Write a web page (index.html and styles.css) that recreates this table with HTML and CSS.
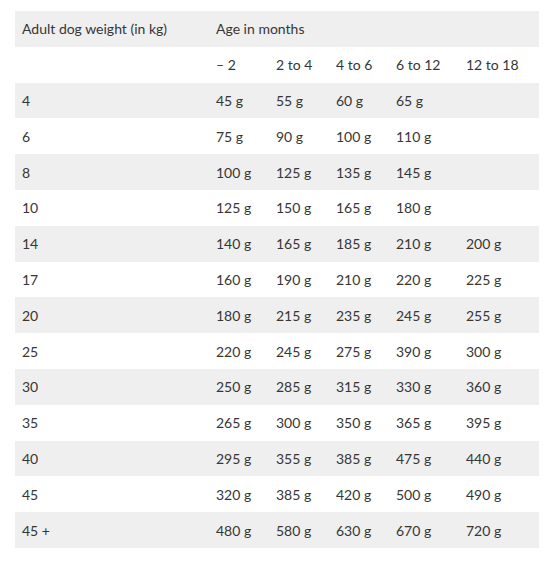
FILE: index.html
```html
<!DOCTYPE html>
<html>
<head>
<meta charset="utf-8">
<link rel="stylesheet" href="styles.css">
</head>
<body>
<table class="feed">
  <colgroup>
    <col class="c1"><col class="c2"><col class="c3"><col class="c4"><col class="c5"><col class="c6">
  </colgroup>
  <thead>
    <tr><th>Adult dog weight (in kg)</th><th colspan="5">Age in months</th></tr>
    <tr><th></th><th>– 2</th><th>2 to 4</th><th>4 to 6</th><th>6 to 12</th><th>12 to 18</th></tr>
  </thead>
  <tbody>
    <tr><td>4</td><td>45 g</td><td>55 g</td><td>60 g</td><td>65 g</td><td></td></tr>
    <tr><td>6</td><td>75 g</td><td>90 g</td><td>100 g</td><td>110 g</td><td></td></tr>
    <tr><td>8</td><td>100 g</td><td>125 g</td><td>135 g</td><td>145 g</td><td></td></tr>
    <tr><td>10</td><td>125 g</td><td>150 g</td><td>165 g</td><td>180 g</td><td></td></tr>
    <tr><td>14</td><td>140 g</td><td>165 g</td><td>185 g</td><td>210 g</td><td>200 g</td></tr>
    <tr><td>17</td><td>160 g</td><td>190 g</td><td>210 g</td><td>220 g</td><td>225 g</td></tr>
    <tr><td>20</td><td>180 g</td><td>215 g</td><td>235 g</td><td>245 g</td><td>255 g</td></tr>
    <tr><td>25</td><td>220 g</td><td>245 g</td><td>275 g</td><td>390 g</td><td>300 g</td></tr>
    <tr><td>30</td><td>250 g</td><td>285 g</td><td>315 g</td><td>330 g</td><td>360 g</td></tr>
    <tr><td>35</td><td>265 g</td><td>300 g</td><td>350 g</td><td>365 g</td><td>395 g</td></tr>
    <tr><td>40</td><td>295 g</td><td>355 g</td><td>385 g</td><td>475 g</td><td>440 g</td></tr>
    <tr><td>45</td><td>320 g</td><td>385 g</td><td>420 g</td><td>500 g</td><td>490 g</td></tr>
    <tr><td>45 +</td><td>480 g</td><td>580 g</td><td>630 g</td><td>670 g</td><td>720 g</td></tr>
  </tbody>
</table>
</body>
</html>
```
FILE: styles.css
```css
html, body {
  margin: 0;
  background: #ffffff;
}
body {
  padding: 11px 14px 0 15px;
  font-family: Lato, "Noto Sans", sans-serif;
  font-size: 14px;
  color: #363636;
}
.feed {
  border-collapse: collapse;
  table-layout: fixed;
  width: 524px;
}
.c1 { width: 194px; }
.c2 { width: 60px; }
.c3 { width: 60px; }
.c4 { width: 60px; }
.c5 { width: 70px; }
.c6 { width: 80px; }
.feed th,
.feed td {
  height: 35.8px;
  padding: 0 0 0 7px;
  box-sizing: border-box;
  text-align: left;
  font-weight: 400;
  vertical-align: middle;
  white-space: nowrap;
}
.feed thead tr:nth-child(odd),
.feed tbody tr:nth-child(odd) {
  background: #efefef;
}
.feed thead tr:nth-child(even),
.feed tbody tr:nth-child(even) {
  background: #ffffff;
}
```
